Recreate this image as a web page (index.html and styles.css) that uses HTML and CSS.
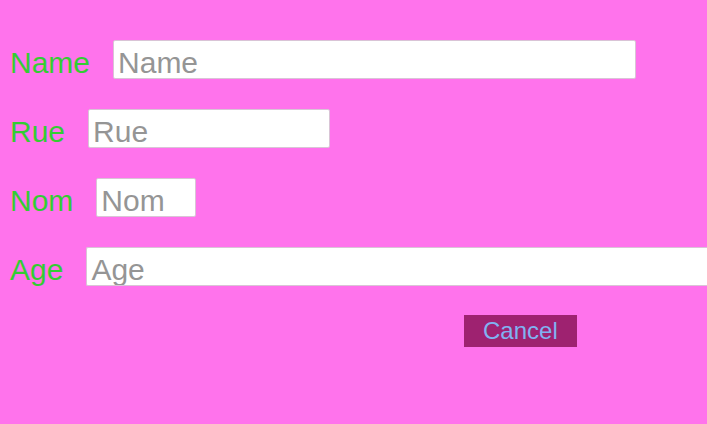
FILE: index.html
```html
<!DOCTYPE html>
<html>
<head>
<meta charset="utf-8">
<link rel="stylesheet" href="styles.css">
</head>
<body>
<form class="form">
  <div class="row">
    <label class="label" for="name">Name</label>
    <input class="field field-name" id="name" type="text" placeholder="Name">
  </div>
  <div class="row">
    <label class="label" for="rue">Rue</label>
    <input class="field field-rue" id="rue" type="text" placeholder="Rue">
  </div>
  <div class="row">
    <label class="label" for="nom">Nom</label>
    <input class="field field-nom" id="nom" type="text" placeholder="Nom">
  </div>
  <div class="row row-wide">
    <label class="label" for="age">Age</label>
    <input class="field field-age" id="age" type="text" placeholder="Age">
  </div>
  <div class="actions">
    <button class="cancel" type="button">Cancel</button>
  </div>
</form>
</body>
</html>
```
FILE: styles.css
```css
html {
  overflow: hidden;
  background: #ff73ec;
}
body {
  margin: 8px 0 8px 8px;
  background: #ff73ec;
  font-family: "Liberation Sans", Arial, sans-serif;
}
.form {
  margin-top: 32px;
  display: flex;
  flex-direction: column;
  align-items: flex-start;
  gap: 29.67px;
}
.row {
  display: flex;
  align-items: baseline;
  gap: 23px;
}
.row-wide {
  align-self: stretch;
}
.label {
  color: #33cc33;
  font-size: 30px;
  white-space: nowrap;
  margin-left: 2px;
  flex: none;
}
.field {
  box-sizing: border-box;
  height: 39px;
  font-family: "Liberation Sans", Arial, sans-serif;
  font-size: 30px;
  padding: 6px 4px 0 4px;
  border: 1px solid #d9c4d6;
  border-radius: 2px;
  background: #ffffff;
  color: #333;
  outline: none;
  flex: none;
  min-width: 0;
}
.field::placeholder {
  color: #959595;
}
.field-name { width: 523px; }
.field-rue { width: 242px; }
.field-nom { width: 100px; }
.field-age {
  flex: 1 1 auto;
  width: auto;
  border-right: 0;
  border-radius: 2px 0 0 2px;
}
.actions {
  display: flex;
  margin-top: -2px;
  padding-left: 456px;
}
.cancel {
  font-family: "Liberation Sans", Arial, sans-serif;
  font-size: 24px;
  padding: 2px 19px;
  border: none;
  border-radius: 0;
  background: #9e2270;
  color: #80b2f2;
}
```
